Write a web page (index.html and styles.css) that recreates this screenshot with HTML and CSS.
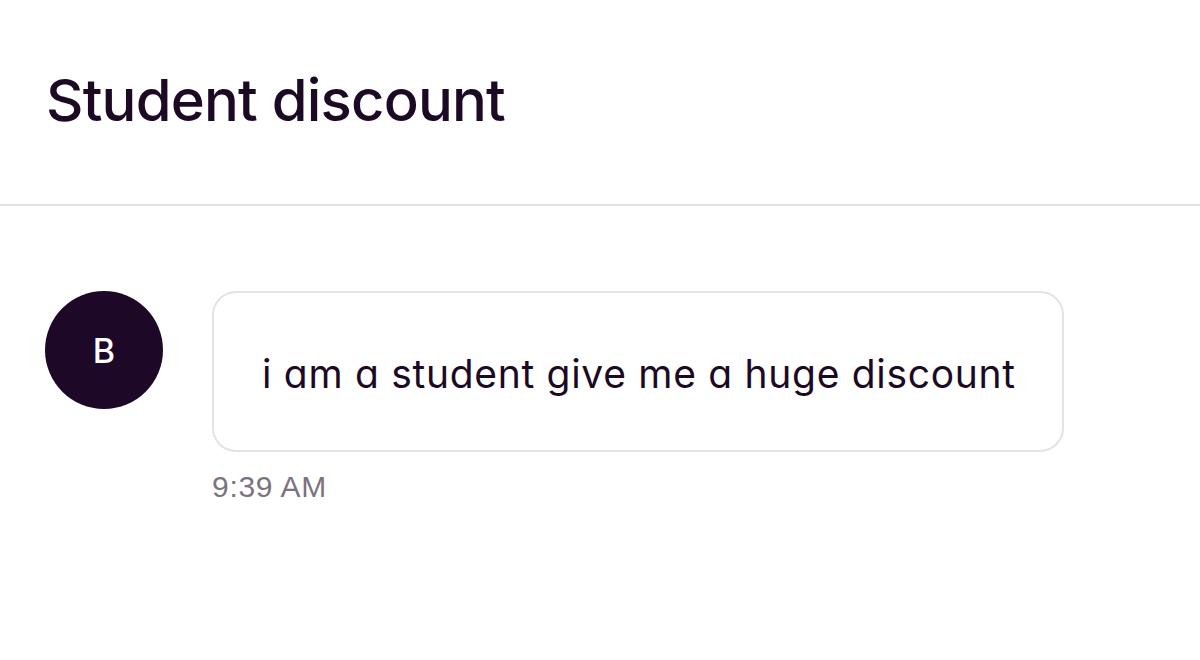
FILE: index.html
```html
<!DOCTYPE html>
<html>
<head>
<meta charset="utf-8">
<link rel="stylesheet" href="styles.css">
</head>
<body>
<header class="header">
  <h1 class="title">Student discount</h1>
</header>
<main class="thread">
  <div class="message">
    <div class="avatar">B</div>
    <div class="content">
      <div class="bubble">i am a student give me a huge discount</div>
      <div class="time">9:39 AM</div>
    </div>
  </div>
</main>
</body>
</html>
```
FILE: styles.css
```css
* { box-sizing: border-box; }
html, body { margin: 0; padding: 0; background: #fff; }
body {
  width: 1200px;
  height: 660px;
  overflow: hidden;
  font-family: Inter, "Liberation Sans", sans-serif;
  color: #1c0a24;
}
.header {
  height: 206px;
  border-bottom: 2px solid #e3e0e8;
  padding: 68px 0 0 46px;
}
.title {
  margin: 0;
  font-size: 58px;
  font-weight: 500;
  line-height: 64px;
  letter-spacing: -0.8px;
  color: #1c0a24;
}
.thread {
  padding: 85px 0 0 45px;
}
.message {
  display: flex;
  align-items: flex-start;
  gap: 49px;
}
.avatar {
  flex: none;
  width: 118px;
  height: 118px;
  border-radius: 50%;
  background: #1e0828;
  color: #fff;
  display: flex;
  align-items: center;
  justify-content: center;
  font-size: 34px;
  font-weight: 500;
}
.content {
  display: flex;
  flex-direction: column;
}
.bubble {
  width: 852px;
  height: 161px;
  border: 2px solid #e4e2e6;
  border-radius: 24px;
  padding: 4px 0 0 48px;
  display: flex;
  align-items: center;
  font-size: 39px;
  letter-spacing: 0.7px;
  font-feature-settings: "cv11" 1;
  color: #1c0a24;
}
.time {
  margin-top: 18px;
  font-family: "Liberation Sans", Arial, sans-serif;
  font-size: 30px;
  line-height: 34px;
  letter-spacing: 0.7px;
  color: #7b7382;
}
```
